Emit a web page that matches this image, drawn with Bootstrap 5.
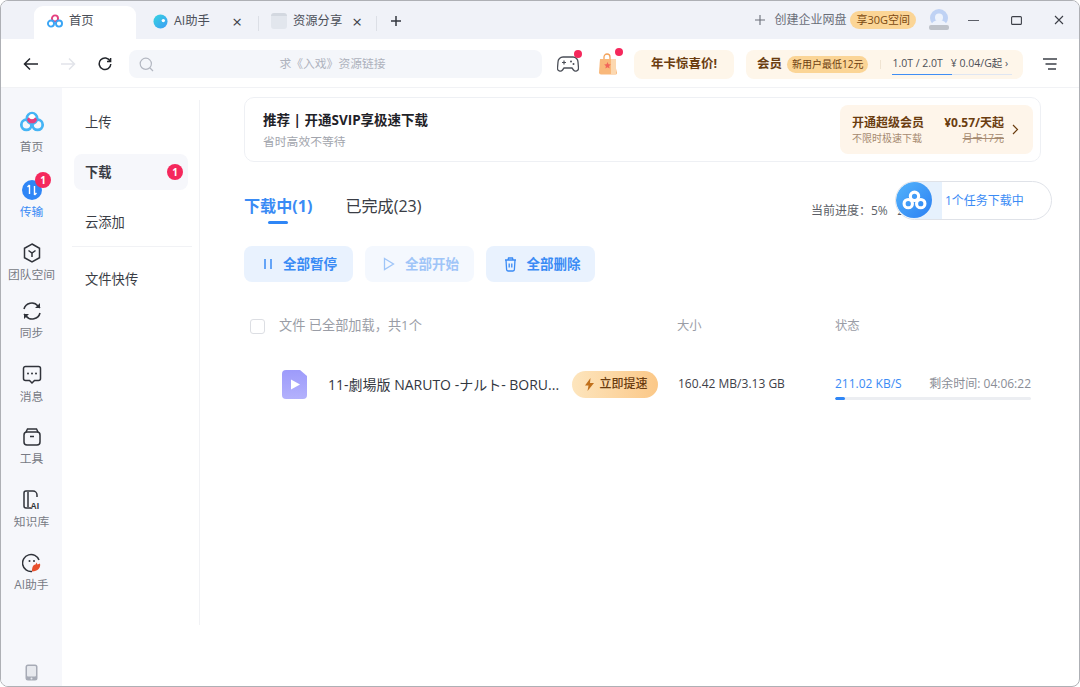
<!DOCTYPE html>
<html lang="zh">
<head>
  <meta charset="UTF-8">
  <title>百度网盘</title>
  <link href="https://cdn.jsdelivr.net/npm/bootstrap@5.3.0/dist/css/bootstrap.min.css" rel="stylesheet">
  <style>
    html, body { height: 100%; overflow: hidden; background: #fff; }
    body { font-family: "Open Sans", "Noto Sans CJK SC", sans-serif; font-size: 12px; color: #33373f; }
    .app-win { width: 1080px; height: 687px; border: 1px solid #aeb0b5; border-radius: 8px; overflow: hidden; position: relative; background: #fff; }

    .tabbar { height: 38px; background: #f0f2f8; padding-left: 33px; padding-top: 5px; }
    .tab-item { height: 33px; padding-bottom: 3px; font-size: 12.3px; color: #4b4f58; white-space: nowrap; }
    .tab-home { width: 102px; background: #fff; border-radius: 9px 9px 0 0; padding-left: 13px; gap: 6px; }
    .tab-ai { width: 122px; padding-left: 17px; gap: 6px; }
    .tab-ai .tab-close { padding-right: 16px; }
    .tab-share { width: 117px; padding-left: 12px; gap: 6px; }
    .tab-plus { padding-left: 13px; }
    .tab-close { font-size: 17px; line-height: 1; color: #3d4048; margin-left: auto; padding-right: 14px; }
    .tab-sep { width: 1px; height: 15px; background: #dcdfe6; margin-top: 1px; }
    .doc-ico { width: 16px; height: 16px; background: #e2e6ed; border-radius: 3px; border-top: 3px solid #d3d8e0; }
    .win-ctrl { padding-right: 15px; padding-bottom: 5px; }
    .make-corp { color: #6a6e78; font-size: 12px; gap: 9px; }
    .corp-tag { background: #fbd596; color: #7b4a12; font-size: 11px; border-radius: 9px; padding: 0 6px; height: 18px; line-height: 18px; margin-left: 4px; }
    .avatar-ico { margin-left: 12px; }
    .min-ico { margin-left: 18px; }
    .ctrl-ico { margin-left: 32px; }

    .toolbar { height: 49px; padding-left: 22px; padding-top: 2px; border-bottom: 1px solid #f1f2f5; }
    .nav-next { margin-left: 21px; }
    .nav-reload { margin-left: 22px; }
    .search-box { width: 413px; height: 28px; background: #f4f6fa; border-radius: 8px; margin-left: 17px; padding-left: 10px; }
    .search-hint { flex: 1; text-align: center; color: #aeb2bd; font-size: 11.8px; padding-right: 31px; }
    .dot-red { position: absolute; width: 8px; height: 8px; background: #f5285c; border-radius: 50%; top: -5px; left: 17px; }
    .ico-wrap { position: relative; display: flex; margin-left: 15px; }
    .ico-gift { margin-left: 19px; }
    .year-pill { width: 100px; height: 29px; margin-left: 16px; background: #fef6ea; border-radius: 8px; font-weight: 700; color: #6b3d10; font-size: 12.5px; }
    .vip-pill { width: 277px; height: 29px; background: #fef6ea; border-radius: 8px; margin-left: 12px; padding-left: 11px; color: #6b3d10; }
    .vip-name { font-weight: 700; font-size: 12.5px; }
    .vip-tag { background: #fbd596; border-radius: 9px; font-size: 10px; padding: 0 5px; height: 17px; line-height: 17px; margin-left: 5px; color: #6b3d10; white-space: nowrap; }
    .vip-sep { width: 1px; height: 9px; background: #f0e4d2; margin-left: 12px; }
    .vip-quota { position: relative; width: 120px; margin-left: 11px; height: 22px; line-height: 21px; font-size: 10.5px; color: #4c4f57; border-bottom: 1px solid #dfe6f2; white-space: nowrap; }
    .vip-quota::after { content: ""; position: absolute; left: 0; bottom: -1px; width: 60px; height: 1px; background: #3f8ef5; }
    .menu-ico { margin-left: 20px; }

    .body-wrap { height: 598px; }
    .side-rail { width: 61px; flex: none; background: #f6f7fb; padding-top: 21px; position: relative; }
    .rail-item { height: 63px; font-size: 11.8px; color: #777a84; line-height: 15px; position: relative; gap: 1px; white-space: nowrap; }
    .rail-item:nth-child(1) { height: 68px; gap: 4px; }
    .rail-item:nth-child(3) { height: 58px; }
    .rail-item:nth-child(4) { height: 64px; }
    .rail-item:nth-child(5) { height: 62px; }
    .rail-item.on { color: #3a8bf5; }
    .rail-ico { width: 26px; height: 26px; display: flex; align-items: center; justify-content: center; }
    .rail-badge { position: absolute; top: -5px; left: 34px; width: 16px; height: 16px; background: #f5285c; color: #fff; border-radius: 50%; font-size: 10px; line-height: 16px; text-align: center; font-weight: 700; }
    .rail-foot { position: absolute; bottom: 5px; left: 24px; }

    .sub-nav { width: 138px; flex: none; height: 525px; border-right: 1px solid #f1f2f5; margin-top: 12px; padding: 4px 11px 0 12px; font-size: 13.3px; color: #3a3d45; }
    .sub-item { height: 36px; padding: 2px 5px 0 11px; margin-bottom: 14px; border-radius: 8px; }
    .sub-item.on { background: #f6f7fb; font-weight: 700; }
    .sub-count { width: 16px; height: 16px; background: #f5285c; color: #fff; border-radius: 50%; font-size: 10px; line-height: 16px; text-align: center; margin-left: auto; margin-top: -2px; }
    .sub-line { border-top: 1px solid #f1f2f5; margin: -8px -4px 14px -2px; }

    .main-pane { flex: 1; padding: 9px 38px 0 44px; position: relative; }
    .promo { height: 65px; border: 1px solid #eef0f4; border-radius: 10px; padding: 0 7px 0 18px; }
    .promo-title { font-size: 13.5px; font-weight: 700; color: #1f2228; line-height: 18px; }
    .promo-sub { font-size: 11.8px; color: #a2a5ad; line-height: 16px; margin-top: 4px; }
    .promo-buy { width: 193px; height: 49px; background: #fef5ea; border-radius: 8px; padding: 0 14px 0 12px; color: #6b3d10; }
    .buy-a { font-size: 12px; font-weight: 700; line-height: 16px; white-space: nowrap; }
    .buy-b { font-size: 10px; color: #a68a70; line-height: 14px; }
    .buy-side { margin-left: auto; text-align: right; }
    .buy-old { font-size: 10px; color: #a68a70; text-decoration: line-through; line-height: 14px; }

    .down-tabs { margin-top: 32px; height: 38px; gap: 33px; font-size: 16.1px; color: #3a3d45; }
    .down-tabs .on { color: #3a8bf5; font-weight: 700; position: relative; }
    .down-tabs .on::after { content: ""; position: absolute; left: 24px; top: 27px; width: 20px; height: 3px; border-radius: 2px; background: #2f86f6; }
    .prog-now { margin-left: auto; width: 230px; font-size: 12px; line-height: 16px; color: #5c5f68; padding-top: 9px; white-space: nowrap; overflow: hidden; }
    .act-row { margin-top: 14px; gap: 12px; }
    .act-btn { width: 109px; height: 36px; padding: 0 0 0 3px; border: 0; border-radius: 8px; background: #e9f2fe; color: #3a8bf5; font-size: 13.5px; font-weight: 700; display: flex; align-items: center; justify-content: center; gap: 10px; }
    .act-btn:disabled { background: #f4f8fe; color: #9fc5f8; opacity: 1; }

    .tbl-head { margin-top: 34px; height: 20px; color: #9a9da6; font-size: 12.3px; padding-left: 6px; }
    .tbl-check { width: 15px; height: 15px; margin: 0 14px 0 0; border: 1px solid #dcdee3; border-radius: 3px; }
    .col-name { width: 398px; flex: none; font-size: 13.2px; white-space: nowrap; }
    .col-size { width: 158px; flex: none; }
    .tbl-row { margin-top: 30px; height: 36px; padding-left: 38px; position: relative; }
    .file-name { width: 238px; flex: none; margin-left: 21px; font-size: 14px; color: #33373f; white-space: nowrap; }
    .speed-btn { width: 86px; height: 27px; border-radius: 14px; background: linear-gradient(90deg, #fde5bd, #fbc888); color: #6b3d10; font-size: 12px; font-weight: 500; margin-left: 6px; gap: 5px; flex: none; padding: 0 0 0 3px; border: 0; }
    .size-cell { width: 157px; flex: none; margin-left: 20px; font-size: 12px; color: #3d4048; white-space: nowrap; }
    .state-cell { width: 196px; flex: none; margin-top: 7px; }
    .state-top { font-size: 12px; line-height: 16px; white-space: nowrap; }
    .speed-val { color: #3a8bf5; }
    .left-time { color: #8a8d96; }
    .state-bar { height: 3px; margin-top: 5px; background: #eceef2; border-radius: 2px; }
    .state-bar .progress-bar { background: #2f86f6; border-radius: 2px; }

    .float-pill { position: absolute; left: 894px; top: 180px; width: 157px; height: 39px; border: 1px solid #dfe2e8; border-radius: 20px; background: #fff; overflow: hidden; color: #3a8bf5; font-size: 12px; padding-left: 49px; line-height: 37px; }
    .float-pill::before { content: ""; position: absolute; left: 0; top: 0; bottom: 0; width: 46px; background: #e6f1fd; }
    .float-logo { position: absolute; left: 0; top: 0; width: 36px; height: 36px; border-radius: 50%; background: linear-gradient(135deg, #53b4fb, #2c80f3); display: flex; align-items: center; justify-content: center; }
  </style>
</head>
<body>
  <div class="app-win">
    <!-- title bar -->
    <div class="tabbar d-flex">
      <div class="tab-item tab-home d-flex align-items-center">
        <svg width="16" height="14" viewBox="0 0 22 19"><circle cx="11" cy="6" r="4.2" fill="none" stroke="#e5407f" stroke-width="2.6"/><circle cx="5.5" cy="13" r="4.2" fill="none" stroke="#3aa5f5" stroke-width="2.6"/><circle cx="16.5" cy="13" r="4.2" fill="none" stroke="#3aa5f5" stroke-width="2.6"/></svg>
        <span>首页</span>
      </div>
      <div class="tab-item tab-ai d-flex align-items-center">
        <svg width="15" height="15" viewBox="0 0 16 16"><defs><linearGradient id="aig" x1="0" y1="0" x2="1" y2="1"><stop offset="0" stop-color="#35d4e0"/><stop offset="1" stop-color="#3d9cf5"/></linearGradient></defs><circle cx="8" cy="8" r="7.5" fill="url(#aig)"/><circle cx="11" cy="7" r="1.8" fill="#fff"/></svg>
        <span>AI助手</span>
        <span class="tab-close">×</span>
      </div>
      <div class="tab-sep align-self-center"></div>
      <div class="tab-item tab-share d-flex align-items-center">
        <div class="doc-ico"></div>
        <span>资源分享</span>
        <span class="tab-close">×</span>
      </div>
      <div class="tab-sep align-self-center"></div>
      <div class="tab-item tab-plus d-flex align-items-center">
        <svg width="12" height="12" viewBox="0 0 12 12"><path d="M6 1v10M1 6h10" stroke="#33373f" stroke-width="1.5"/></svg>
      </div>
      <div class="win-ctrl d-flex align-items-center ms-auto">
        <div class="make-corp d-flex align-items-center">
          <svg width="10" height="10" viewBox="0 0 10 10"><path d="M5 0v10M0 5h10" stroke="#6a6e78" stroke-width="1.1"/></svg>
          <span>创建企业网盘</span>
        </div>
        <span class="corp-tag">享30G空间</span>
        <svg class="avatar-ico" width="22" height="22" viewBox="0 0 22 22"><circle cx="11" cy="9" r="9" fill="#bfd2f4"/><circle cx="11" cy="8.5" r="4" fill="#eef3fc"/><path d="M3 17a8 6 0 0 1 16 0z" fill="#eef3fc"/><rect x="1" y="16" width="20" height="5" rx="2" fill="#bfc3ca"/></svg>
        <svg class="min-ico" width="11" height="11" viewBox="0 0 11 11"><path d="M0 5.5h11" stroke="#5c5f68" stroke-width="1.1"/></svg>
        <svg class="ctrl-ico" width="11" height="11" viewBox="0 0 11 11"><rect x=".6" y="1.6" width="9.8" height="7.8" rx="1" fill="none" stroke="#3d4048" stroke-width="1.1"/></svg>
        <svg class="ctrl-ico" width="10" height="10" viewBox="0 0 10 10"><path d="M1 1l8 8M9 1l-8 8" stroke="#3d4048" stroke-width="1.1"/></svg>
      </div>
    </div>

    <!-- toolbar -->
    <div class="toolbar d-flex align-items-center">
      <svg width="16" height="14" viewBox="0 0 16 14"><path d="M15 7H2M7 1.5L1.5 7 7 12.5" fill="none" stroke="#23262c" stroke-width="1.5"/></svg>
      <svg class="nav-next" width="16" height="14" viewBox="0 0 16 14"><path d="M1 7h13M9 1.5L14.5 7 9 12.5" fill="none" stroke="#e2e4ea" stroke-width="1.5"/></svg>
      <svg class="nav-reload" width="14" height="14" viewBox="0 0 14 14"><path d="M12.2 4.2A5.8 5.8 0 1 0 12.8 7M12.6 1v3.6H9" fill="none" stroke="#23262c" stroke-width="1.5"/></svg>
      <div class="search-box d-flex align-items-center">
        <svg width="15" height="15" viewBox="0 0 15 15"><circle cx="6.8" cy="6.8" r="5.6" fill="none" stroke="#b3b7c1" stroke-width="1.2"/><path d="M11 11l3 3" stroke="#b3b7c1" stroke-width="1.2"/></svg>
        <div class="search-hint">求《入戏》资源链接</div>
      </div>
      <div class="ico-wrap">
        <svg width="22" height="18" viewBox="0 0 22 18"><path d="M6 2h10a5 5 0 0 1 5 5l.5 6a2.8 2.8 0 0 1-5 2L15 13H7l-1.500 2a2.800 2.800 0 0 1-5-2L1 7a5 5 0 0 1 5-5z" fill="none" stroke="#4b4f58" stroke-width="1.300"/><path d="M5 7.500h4M7 5.500v4" stroke="#4b4f58" stroke-width="1.200"/><circle cx="14" cy="6.500" r="1" fill="#4b4f58"/><circle cx="16.500" cy="9" r="1" fill="#4b4f58"/></svg>
        <span class="dot-red"></span>
      </div>
      <div class="ico-wrap ico-gift">
        <svg width="20" height="22" viewBox="0 0 20 22"><path d="M6 6V4a3 3 0 0 1 6 0v2" fill="none" stroke="#f3a25a" stroke-width="1.300"/><path d="M2 6h14l3 14a1.500 1.500 0 0 1-1.500 1.500H3A2 2 0 0 1 1 19.500z" fill="#f9b87a"/><rect x="13" y="6" width="5" height="15" fill="#fcd8b0"/><path d="M9.500 9l1 2.200 2.400.3-1.800 1.600.5 2.400-2.100-1.200-2.100 1.200.5-2.400L6.100 11.500l2.400-.3z" fill="#f2655a"/></svg>
        <span class="dot-red"></span>
      </div>
      <div class="year-pill d-flex align-items-center justify-content-center">年卡惊喜价!</div>
      <div class="vip-pill d-flex align-items-center">
        <span class="vip-name">会员</span>
        <span class="vip-tag">新用户最低12元</span>
        <span class="vip-sep"></span>
        <div class="vip-quota d-flex"><span>1.0T / 2.0T</span><span class="ms-2">¥ 0.04/G起 ›</span></div>
      </div>
      <svg class="menu-ico" width="14" height="14" viewBox="0 0 14 14"><path d="M0 2h14M2.500 7h11M5 12h8" stroke="#3d4048" stroke-width="1.400"/></svg>
    </div>

    <div class="body-wrap d-flex">
      <!-- left rail -->
      <nav class="side-rail d-flex flex-column">
        <div class="rail-item d-flex flex-column align-items-center">
          <div class="rail-ico"><svg width="28" height="24" viewBox="0 0 28 24"><circle cx="8" cy="15" r="5.500" fill="none" stroke="#45b4f5" stroke-width="3"/><circle cx="20" cy="15" r="5.500" fill="none" stroke="#45b4f5" stroke-width="3"/><circle cx="14" cy="8" r="5.500" fill="#fff" stroke="#45b4f5" stroke-width="3"/><path d="M8.500 9.500a5.800 5.800 0 0 0 11 0l-2-2.500a4 4 0 0 1-7 0z" fill="#e5407f"/><circle cx="14" cy="6" r="2.600" fill="#fff"/></svg></div>
          <span>首页</span>
        </div>
        <div class="rail-item on d-flex flex-column align-items-center">
          <div class="rail-ico"><svg width="20" height="20" viewBox="0 0 20 20"><circle cx="10" cy="10" r="10" fill="#2f86f6"/><path d="M7.500 5v9M5.500 7l2-2M12.500 15V6M14.500 13l-2 2" stroke="#fff" stroke-width="1.400" fill="none"/></svg></div>
          <span>传输</span>
          <span class="rail-badge">1</span>
        </div>
        <div class="rail-item d-flex flex-column align-items-center">
          <div class="rail-ico"><svg width="18" height="20" viewBox="0 0 18 20"><path d="M9 1l7.500 4.300v9.400L9 19l-7.500-4.300V5.300z" fill="none" stroke="#30333a" stroke-width="1.500"/><path d="M5.500 7.500L9 10l3.500-2.500M9 10v4" fill="none" stroke="#30333a" stroke-width="1.500"/></svg></div>
          <span>团队空间</span>
        </div>
        <div class="rail-item d-flex flex-column align-items-center">
          <div class="rail-ico"><svg width="20" height="20" viewBox="0 0 20 20"><path d="M2 8a8 8 0 0 1 14-3l2 2M18 12a8 8 0 0 1-14 3l-2-2" fill="none" stroke="#30333a" stroke-width="1.600"/><path d="M18 2v5h-5M2 18v-5h5" fill="#30333a"/></svg></div>
          <span>同步</span>
        </div>
        <div class="rail-item d-flex flex-column align-items-center">
          <div class="rail-ico"><svg width="20" height="20" viewBox="0 0 20 20"><path d="M3.500 1.500h13a2 2 0 0 1 2 2v10a2 2 0 0 1-2 2h-4L10 18l-2.500-2.500h-4a2 2 0 0 1-2-2v-10a2 2 0 0 1 2-2z" fill="none" stroke="#30333a" stroke-width="1.500"/><circle cx="6" cy="8.500" r="1" fill="#30333a"/><circle cx="10" cy="8.500" r="1" fill="#30333a"/><circle cx="14" cy="8.500" r="1" fill="#30333a"/></svg></div>
          <span>消息</span>
        </div>
        <div class="rail-item d-flex flex-column align-items-center">
          <div class="rail-ico"><svg width="18" height="18" viewBox="0 0 18 18"><rect x="1" y="4" width="16" height="13" rx="3" fill="none" stroke="#30333a" stroke-width="1.500"/><path d="M3 4l1.500-3h9L15 4M7 8.500h4" fill="none" stroke="#30333a" stroke-width="1.500"/></svg></div>
          <span>工具</span>
        </div>
        <div class="rail-item d-flex flex-column align-items-center">
          <div class="rail-ico"><svg width="20" height="20" viewBox="0 0 20 20"><path d="M9 18H4a2 2 0 0 1-2-2V3a2 2 0 0 1 2-2h7a4 4 0 0 1 4 4v2M6 2v15" fill="none" stroke="#30333a" stroke-width="1.500"/><text x="8.500" y="18.500" font-size="8.500" font-weight="700" fill="#30333a" font-family="Liberation Sans">AI</text></svg></div>
          <span>知识库</span>
        </div>
        <div class="rail-item d-flex flex-column align-items-center">
          <div class="rail-ico"><svg width="20" height="20" viewBox="0 0 20 20"><path d="M17 7A8.500 8.500 0 1 0 10 18.500" fill="none" stroke="#30333a" stroke-width="1.500"/><circle cx="7.500" cy="8" r="1" fill="#30333a"/><circle cx="12" cy="8" r="1" fill="#30333a"/><path d="M10 18.500c0-4 1-7 3.500-7l1-2 1 2 2.500-1c1 4-2 8-8 8z" fill="#e8502d"/></svg></div>
          <span>AI助手</span>
        </div>
        <div class="rail-foot"><svg width="13" height="17" viewBox="0 0 13 17"><rect x=".5" y=".5" width="12" height="16" rx="2.500" fill="#a7abb6"/><rect x="2" y="2" width="9" height="10.500" rx="1" fill="#e7e9ee"/><circle cx="6.500" cy="14.500" r="1" fill="#e7e9ee"/></svg></div>
      </nav>

      <!-- sub menu -->
      <div class="sub-nav">
        <div class="sub-item d-flex align-items-center">上传</div>
        <div class="sub-item on d-flex align-items-center">下载<span class="sub-count">1</span></div>
        <div class="sub-item d-flex align-items-center">云添加</div>
        <div class="sub-line"></div>
        <div class="sub-item d-flex align-items-center">文件快传</div>
      </div>

      <!-- main -->
      <main class="main-pane">
        <div class="promo d-flex align-items-center justify-content-between">
          <div>
            <div class="promo-title">推荐 | 开通SVIP享极速下载</div>
            <div class="promo-sub">省时高效不等待</div>
          </div>
          <div class="promo-buy d-flex align-items-center">
            <div>
              <div class="buy-a">开通超级会员</div>
              <div class="buy-b">不限时极速下载</div>
            </div>
            <div class="buy-side">
              <div class="buy-a">¥0.57/天起</div>
              <div class="buy-old">月卡17元</div>
            </div>
            <svg class="ms-2" width="7" height="11" viewBox="0 0 7 11"><path d="M1 1l4.500 4.500L1 10" fill="none" stroke="#6b3d10" stroke-width="1.200"/></svg>
          </div>
        </div>

        <div class="down-tabs d-flex">
          <div class="on">下载中(1)</div>
          <div>已完成(23)</div>
          <div class="prog-now">当前进度：5%&nbsp;&nbsp;&nbsp;211.02 KB/S</div>
        </div>

        <div class="act-row d-flex">
          <button class="btn act-btn" type="button"><svg width="10" height="12" viewBox="0 0 10 12"><path d="M2 1v10M8 1v10" stroke="#3a8bf5" stroke-width="1.500"/></svg>全部暂停</button>
          <button class="btn act-btn" type="button" disabled><svg width="12" height="14" viewBox="0 0 12 14"><path d="M1.500 1.500l9 5.500-9 5.500z" fill="none" stroke="#9fc5f8" stroke-width="1.300"/></svg>全部开始</button>
          <button class="btn act-btn" type="button"><svg width="13" height="15" viewBox="0 0 13 15"><path d="M1 3h11M4 3l.5-2h4L9 3M2 3l.6 9.500A1.500 1.500 0 0 0 4 14h5a1.500 1.500 0 0 0 1.400-1.500L11 3M5.200 6.500v4M7.800 6.500v4" fill="none" stroke="#3a8bf5" stroke-width="1.300"/></svg>全部删除</button>
        </div>

        <div class="tbl-head d-flex align-items-center">
          <input class="form-check-input tbl-check" type="checkbox" aria-label="全选">
          <div class="col-name">文件 已全部加载，共1个</div>
          <div class="col-size">大小</div>
          <div>状态</div>
        </div>

        <div class="tbl-row d-flex align-items-center">
          <svg class="flex-shrink-0" width="25" height="29" viewBox="0 0 25 29"><defs><linearGradient id="fileg" x1="0" y1="0" x2="0" y2="1"><stop offset="0" stop-color="#9d9bfb"/><stop offset="1" stop-color="#b3b1fc"/></linearGradient></defs><path d="M4 0h14l7 6v19a4 4 0 0 1-4 4H4a4 4 0 0 1-4-4V4a4 4 0 0 1 4-4z" fill="url(#fileg)"/><path d="M9 9.500l9 5-9 5z" fill="#fff"/></svg>
          <div class="file-name">11-劇場版 NARUTO -ナルト- BORU...</div>
          <button class="btn speed-btn d-flex align-items-center justify-content-center" type="button"><svg width="9" height="13" viewBox="0 0 9 13"><path d="M5.500 0L0 7.500h3.500L2.500 13 9 5H5z" fill="#c0701c"/></svg>立即提速</button>
          <div class="size-cell">160.42 MB/3.13 GB</div>
          <div class="state-cell">
            <div class="state-top d-flex justify-content-between"><span class="speed-val">211.02 KB/S</span><span class="left-time">剩余时间: 04:06:22</span></div>
            <div class="progress state-bar"><div class="progress-bar" style="width:5%"></div></div>
          </div>
        </div>
      </main>
    </div>

    <!-- floating download pill -->
    <div class="float-pill">
      <div class="float-logo"><svg width="25" height="21" viewBox="0 0 24 20"><circle cx="6" cy="13" r="4" fill="none" stroke="#fff" stroke-width="3"/><circle cx="18" cy="13" r="4" fill="none" stroke="#fff" stroke-width="3"/><circle cx="12" cy="6" r="4" fill="none" stroke="#fff" stroke-width="3"/></svg></div>
      1个任务下载中
    </div>
  </div>

  <script src="https://cdn.jsdelivr.net/npm/bootstrap@5.3.0/dist/js/bootstrap.bundle.min.js"></script>
</body>
</html>
